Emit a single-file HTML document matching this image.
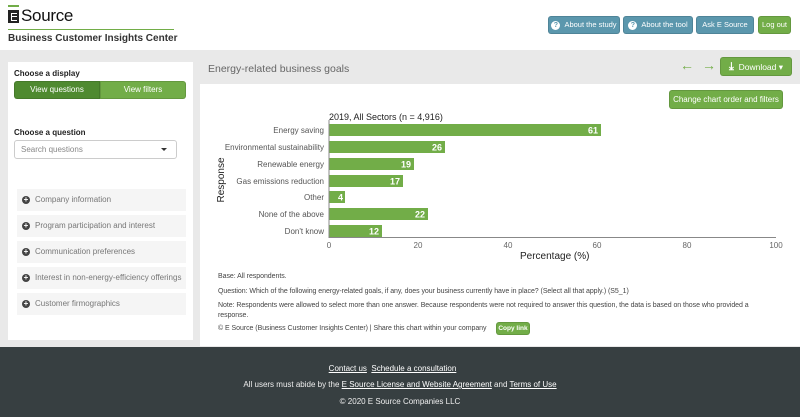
<!DOCTYPE html>
<html><head><meta charset="utf-8"><style>
*{margin:0;padding:0;box-sizing:border-box}
body{width:800px;height:417px;overflow:hidden;font-family:"Liberation Sans",Arial,sans-serif;background:#e9e9e9;position:relative}
.a{position:absolute}
.btn{position:absolute;height:18px;border-radius:3px;color:#fff;font-size:8px;line-height:18px;text-align:center;border:1px solid rgba(0,0,0,.12);white-space:nowrap;display:flex;align-items:center;justify-content:center}
.blue{background:#5b97ad}
.green{background:#72ad48}
.q{position:absolute;left:17px;width:169px;height:22px;background:#f5f5f5;font-size:8px;color:#777;line-height:22px;padding-left:18px}
.q:before{content:"";position:absolute;left:5px;top:7px;width:8px;height:8px;border-radius:50%;background:#444}
.q:after{content:"+";position:absolute;left:6px;top:0;width:6px;color:#fff;font-size:8px;font-weight:bold;text-align:center;line-height:22px}
.n{font-size:7px;color:#444;position:absolute;left:218px;white-space:nowrap;letter-spacing:-0.05px}
a{color:#fff;text-decoration:underline}
.ic{display:inline-block;flex:none;width:9px;height:9px;border-radius:50%;background:#fff;color:#5b97ad;font-size:7px;line-height:9px;font-weight:bold;margin-right:4px;text-align:center}
</style></head><body>
<div class="a" style="left:0;top:0;width:800px;height:50px;background:#fff"></div>
<div class="a" style="left:8px;top:5px;width:11px;height:1.5px;background:#72ad48"></div>
<div class="a" style="left:8px;top:10px;width:11px;height:13px;background:#222"></div>
<div class="a" style="left:10.5px;top:12.5px;width:6px;height:8px;border:1.6px solid #fff;border-right:none"></div>
<div class="a" style="left:10.5px;top:15.7px;width:6px;height:1.6px;background:#fff"></div>
<div class="a" style="left:21px;top:6px;font-size:17px;color:#111;letter-spacing:-0.3px">Source</div>
<div class="a" style="left:8px;top:29px;width:166px;height:1px;background:#72ad48"></div>
<div class="a" style="left:8px;top:33px;font-size:10px;font-weight:bold;color:#333">Business Customer Insights Center</div>
<div class="btn blue" style="left:548px;top:16px;width:72px;font-size:7.5px"><span class="ic">?</span>About the study</div>
<div class="btn blue" style="left:623px;top:16px;width:70px;font-size:7.5px"><span class="ic">?</span>About the tool</div>
<div class="btn blue" style="left:696px;top:16px;width:58px;font-size:7.5px">Ask E Source</div>
<div class="btn green" style="left:758px;top:16px;width:33px;font-size:7.5px">Log out</div>

<div class="a" style="left:8px;top:62px;width:185px;height:278px;background:#fff"></div>
<div class="a" style="left:14px;top:69px;font-size:8px;font-weight:bold;color:#222">Choose a display</div>
<div class="btn" style="left:14px;top:81px;width:86px;background:#4f8a30;border-radius:3px 0 0 3px">View questions</div>
<div class="btn green" style="left:100px;top:81px;width:86px;border-radius:0 3px 3px 0">View filters</div>
<div class="a" style="left:14px;top:128px;font-size:8px;font-weight:bold;color:#222">Choose a question</div>
<div class="a" style="left:14px;top:140px;width:163px;height:19px;border:1px solid #ccc;border-radius:3px;font-size:8px;color:#888;line-height:17px;padding-left:6px">Search questions</div>
<div class="a" style="left:161px;top:148px;border:3px solid transparent;border-top:3px solid #333"></div>
<div class="q" style="top:189px">Company information</div>
<div class="q" style="top:215px">Program participation and interest</div>
<div class="q" style="top:241px">Communication preferences</div>
<div class="q" style="top:267px">Interest in non-energy-efficiency offerings</div>
<div class="q" style="top:293px">Customer firmographics</div>

<div class="a" style="left:208px;top:63px;font-size:10.5px;color:#666">Energy-related business goals</div>
<div class="a" style="left:680px;top:57px;font-size:14px;font-weight:bold;color:#72ad48">&#8592;</div>
<div class="a" style="left:702px;top:57px;font-size:14px;font-weight:bold;color:#72ad48">&#8594;</div>
<div class="btn green" style="left:720px;top:57px;width:72px;height:19px;font-size:8.5px"><b style="font-size:11px">&#10515;</b>&nbsp; Download &#9662;</div>
<div class="a" style="left:200px;top:84px;width:600px;height:262px;background:#fff"></div>
<div class="btn green" style="left:669px;top:90px;width:114px;height:19px">Change chart order and filters</div>

<svg class="a" style="left:0;top:0" width="800" height="270" font-family="Liberation Sans,Arial,sans-serif">
<text x="329" y="120" font-size="9" fill="#222">2019, All Sectors (n = 4,916)</text>
<g font-size="8" fill="#555" text-anchor="end">
<text x="324" y="133">Energy saving</text>
<text x="324" y="150">Environmental sustainability</text>
<text x="324" y="167">Renewable energy</text>
<text x="324" y="184">Gas emissions reduction</text>
<text x="324" y="200">Other</text>
<text x="324" y="217">None of the above</text>
<text x="324" y="234">Don't know</text>
</g>
<g fill="#72ad48">
<rect x="329" y="124" width="272" height="12"/>
<rect x="329" y="141" width="116" height="12"/>
<rect x="329" y="158" width="85" height="12"/>
<rect x="329" y="175" width="74" height="12"/>
<rect x="329" y="191" width="16" height="12"/>
<rect x="329" y="208" width="99" height="12"/>
<rect x="329" y="225" width="53" height="12"/>
</g>
<g font-size="9" font-weight="bold" fill="#fff" text-anchor="end">
<text x="598" y="133.5">61</text><text x="442" y="150.5">26</text><text x="411" y="167.5">19</text>
<text x="400" y="184.5">17</text><text x="343" y="200.5">4</text><text x="425" y="217.5">22</text><text x="379" y="234.5">12</text>
</g>
<line x1="329" y1="120" x2="329" y2="238" stroke="#888" stroke-width="1"/>
<line x1="329" y1="237.5" x2="776" y2="237.5" stroke="#888" stroke-width="1"/>
<g font-size="8" fill="#666" text-anchor="middle">
<text x="329" y="248">0</text><text x="418" y="248">20</text><text x="508" y="248">40</text><text x="597" y="248">60</text><text x="687" y="248">80</text><text x="776" y="248">100</text>
</g>
<text x="520" y="259" font-size="10" fill="#222">Percentage (%)</text>
<text transform="translate(224,180) rotate(-90)" font-size="10" fill="#222" text-anchor="middle">Response</text>
</svg>

<div class="n" style="top:273px">Base: All respondents.</div>
<div class="n" style="top:288px">Question: Which of the following energy-related goals, if any, does your business currently have in place? (Select all that apply.) (S5_1)</div>
<div class="n" style="top:301px;width:560px;line-height:10px;white-space:normal">Note: Respondents were allowed to select more than one answer. Because respondents were not required to answer this question, the data is based on those who provided a response.</div>
<div class="n" style="top:325px">© E Source (Business Customer Insights Center) | Share this chart within your company</div>
<div class="btn green" style="left:496px;top:322px;width:34px;height:13px;font-size:6.5px;font-weight:bold">Copy link</div>

<div class="a" style="left:0;top:347px;width:800px;height:70px;background:#373f41"></div>
<div class="a" style="left:0;top:364px;width:800px;text-align:center;font-size:8px;color:#fff"><a style="margin-left:-15px">Contact us</a>&nbsp; <a>Schedule a consultation</a></div>
<div class="a" style="left:0;top:380px;width:800px;text-align:center;font-size:8px;color:#eee">All users must abide by the <a>E Source License and Website Agreement</a> and <a>Terms of Use</a></div>
<div class="a" style="left:0;top:397px;width:800px;text-align:center;font-size:8px;color:#eee">© 2020 E Source Companies LLC</div>
</body></html>
